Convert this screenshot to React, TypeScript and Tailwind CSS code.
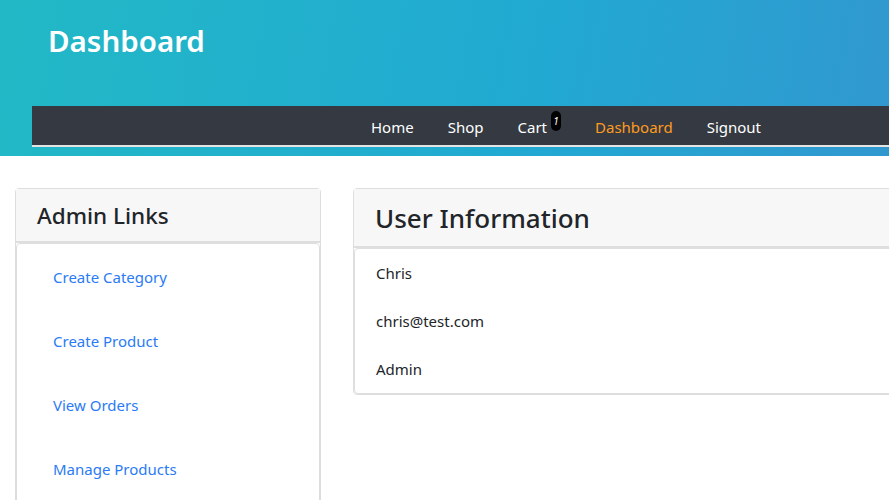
const NAV = [
  { label: 'Home', active: false },
  { label: 'Shop', active: false },
  { label: 'Cart', active: false, badge: 1 },
  { label: 'Dashboard', active: true },
  { label: 'Signout', active: false },
]

const ADMIN_LINKS = ['Create Category', 'Create Product', 'View Orders', 'Manage Products']
const USER_INFO = ['Chris', 'chris@test.com', 'Admin']

export default function App() {
  return (
    <div className="h-[500px] w-[889px] overflow-hidden bg-white font-['Noto_Sans',sans-serif] text-[#212529]">
      {/* Jumbotron header */}
      <header className="h-[156px] bg-[linear-gradient(100deg,#22b9c6_0%,#21a9d2_60%,#3198cf_100%)] pt-[20px] pl-[32px]">
        <h1 className="pl-[16px] text-[29.5px] leading-[42px] font-semibold text-white">Dashboard</h1>
        <nav className="mt-[44px] flex h-[41px] items-center border-b-2 border-[#e4e4e4] bg-[#353a42] pl-[339px]">
          {NAV.map((item) => (
            <a
              key={item.label}
              href="#"
              className={`relative mr-[34px] flex items-start text-[15px] leading-[20px] ${
                item.active ? 'text-[#ff9b1f]' : 'text-white'
              }`}
            >
              <span className="pt-[2px]">{item.label}</span>
              {item.badge && (
                <span className="ml-[4px] -mt-[4px] flex h-[20px] w-[10px] items-center justify-center rounded-full bg-black text-[10px] text-white italic">
                  {item.badge}
                </span>
              )}
            </a>
          ))}
        </nav>
      </header>

      <main className="flex gap-[32px] pt-[32px] pl-[15px]">
        {/* Admin links card */}
        <section className="w-[306px] shrink-0 rounded-[4px] border border-[#dedede]">
          <div className="h-[54px] border-b-2 border-[#dedede] bg-[#f7f7f7] pl-[21px] text-[22.5px] leading-[54px] font-medium">
            Admin Links
          </div>
          <ul className="rounded-[4px] border border-[#dedede] pb-[20px]">
            {ADMIN_LINKS.map((link) => (
              <li key={link} className="h-[64px] pt-[22px] pl-[36px] text-[15px] text-[#2a7bf5]">
                <a href="#">{link}</a>
              </li>
            ))}
          </ul>
        </section>

        {/* User info card */}
        <section className="w-[600px] shrink-0 self-start rounded-[4px] border border-[#dedede]">
          <div className="h-[59px] border-b-2 border-[#dedede] bg-[#f7f7f7] pl-[21px] text-[26px] leading-[59px] font-medium">
            User Information
          </div>
          <ul className="rounded-[4px] border border-[#dedede]">
            {USER_INFO.map((v) => (
              <li key={v} className="py-[10px] pl-[21px] text-[15px] leading-[28px]">
                {v}
              </li>
            ))}
          </ul>
        </section>
      </main>
    </div>
  )
}
